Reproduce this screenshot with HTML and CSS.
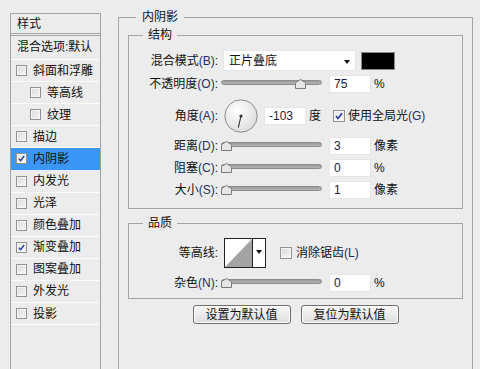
FILE: index.html
```html
<!DOCTYPE html>
<html lang="zh">
<head>
<meta charset="utf-8">
<title>图层样式</title>
<link rel="stylesheet" href="styles.css">
</head>
<body>
<div class="window">
  <aside class="styles">
    <div class="styles-head">样式</div>
    <div class="styles-blend">混合选项:默认</div>
    <ul class="style-list">
      <li class="item"><span class="cb"></span>斜面和浮雕</li>
      <li class="item sub"><span class="cb"></span>等高线</li>
      <li class="item sub"><span class="cb"></span>纹理</li>
      <li class="item"><span class="cb"></span>描边</li>
      <li class="item active"><span class="cb checked"><svg viewBox="0 0 11 11"><path d="M2.2 5.6 L4.4 8.2 L8.8 2.4"/></svg></span>内阴影</li>
      <li class="item"><span class="cb"></span>内发光</li>
      <li class="item"><span class="cb"></span>光泽</li>
      <li class="item"><span class="cb"></span>颜色叠加</li>
      <li class="item"><span class="cb checked"><svg viewBox="0 0 11 11"><path d="M2.2 5.6 L4.4 8.2 L8.8 2.4"/></svg></span>渐变叠加</li>
      <li class="item"><span class="cb"></span>图案叠加</li>
      <li class="item"><span class="cb"></span>外发光</li>
      <li class="item"><span class="cb"></span>投影</li>
    </ul>
  </aside>

  <main class="main">
    <fieldset class="group outer">
      <legend class="legend outer-legend">内阴影</legend>

      <fieldset class="group inner structure">
        <legend class="legend">结构</legend>

        <div class="row r-blend">
          <label class="lbl">混合模式<span class="k">(B)</span>:</label>
          <div class="select">正片叠底<span class="arrow"></span></div>
          <span class="swatch"></span>
        </div>

        <div class="row r-field">
          <label class="lbl">不透明度<span class="k">(O)</span>:</label>
          <div class="slider"><span class="track"></span><svg class="thumb" style="left:74px" viewBox="0 0 11 10"><path d="M0.5 9.5 V4.5 Q0.5 3.5 1.5 3 L5.5 0.5 L9.5 3 Q10.5 3.5 10.5 4.5 V9.5 Z"/></svg></div>
          <span class="num">75</span><span class="unit">%</span>
        </div>

        <div class="row r-angle">
          <label class="lbl">角度<span class="k">(A)</span>:</label>
          <svg class="dial" viewBox="0 0 34 34">
            <defs>
              <radialGradient id="dg" cx="40%" cy="35%" r="70%">
                <stop offset="0" stop-color="#ffffff"/>
                <stop offset="1" stop-color="#dcdcdc"/>
              </radialGradient>
            </defs>
            <circle cx="17" cy="17" r="16.2" fill="url(#dg)" stroke="#8c8c8c" stroke-width="1"/>
            <line x1="17" y1="17" x2="14.3" y2="28.6" stroke="#333" stroke-width="1.1"/>
            <circle cx="17" cy="17" r="1.6" fill="#333"/>
          </svg>
          <span class="num angle-num">-103</span><span class="unit">度</span>
          <span class="cb checked global-cb"><svg viewBox="0 0 11 11"><path d="M2.2 5.6 L4.4 8.2 L8.8 2.4"/></svg></span>
          <span class="cb-text">使用全局光<span class="k">(G)</span></span>
        </div>

        <div class="row r-field">
          <label class="lbl">距离<span class="k">(D)</span>:</label>
          <div class="slider"><span class="track"></span><svg class="thumb" style="left:0px" viewBox="0 0 11 10"><path d="M0.5 9.5 V4.5 Q0.5 3.5 1.5 3 L5.5 0.5 L9.5 3 Q10.5 3.5 10.5 4.5 V9.5 Z"/></svg></div>
          <span class="num">3</span><span class="unit">像素</span>
        </div>

        <div class="row r-field">
          <label class="lbl">阻塞<span class="k">(C)</span>:</label>
          <div class="slider"><span class="track"></span><svg class="thumb" style="left:0px" viewBox="0 0 11 10"><path d="M0.5 9.5 V4.5 Q0.5 3.5 1.5 3 L5.5 0.5 L9.5 3 Q10.5 3.5 10.5 4.5 V9.5 Z"/></svg></div>
          <span class="num">0</span><span class="unit">%</span>
        </div>

        <div class="row r-field">
          <label class="lbl">大小<span class="k">(S)</span>:</label>
          <div class="slider"><span class="track"></span><svg class="thumb" style="left:0px" viewBox="0 0 11 10"><path d="M0.5 9.5 V4.5 Q0.5 3.5 1.5 3 L5.5 0.5 L9.5 3 Q10.5 3.5 10.5 4.5 V9.5 Z"/></svg></div>
          <span class="num">1</span><span class="unit">像素</span>
        </div>
      </fieldset>

      <fieldset class="group inner quality">
        <legend class="legend">品质</legend>

        <div class="row r-contour">
          <label class="lbl">等高线:</label>
          <div class="contour">
            <svg class="contour-preview" viewBox="0 0 28 27" preserveAspectRatio="none">
              <rect x="0" y="0" width="28" height="27" fill="#ffffff"/>
              <polygon points="0,27 28,0 28,27" fill="#a3a3a3"/>
            </svg>
            <span class="contour-drop"><span class="arrow"></span></span>
          </div>
          <span class="cb aa-cb"></span>
          <span class="cb-text">消除锯齿<span class="k">(L)</span></span>
        </div>

        <div class="row r-field r-noise">
          <label class="lbl">杂色<span class="k">(N)</span>:</label>
          <div class="slider"><span class="track"></span><svg class="thumb" style="left:0px" viewBox="0 0 11 10"><path d="M0.5 9.5 V4.5 Q0.5 3.5 1.5 3 L5.5 0.5 L9.5 3 Q10.5 3.5 10.5 4.5 V9.5 Z"/></svg></div>
          <span class="num">0</span><span class="unit">%</span>
        </div>
      </fieldset>

      <div class="buttons">
        <button class="btn" type="button">设置为默认值</button>
        <button class="btn" type="button">复位为默认值</button>
      </div>
    </fieldset>
  </main>
</div>
</body>
</html>
```
FILE: styles.css
```css
* { box-sizing: border-box; }

html, body {
  margin: 0;
  padding: 0;
  background: #ececec;
  height: 369px;
  overflow: hidden;
}

body {
  font-family: "Liberation Sans", "Noto Sans CJK SC", sans-serif;
  font-size: 12px;
  line-height: 16px;
  color: #111;
}

.window {
  display: flex;
  align-items: flex-start;
  height: 369px;
}

/* ---------- left style list ---------- */
.styles {
  margin: 13px 0 0 10px;
  width: 91px;
  height: 356px;
  border: 1px solid #a2a2a2;
  border-bottom: none;
  flex: none;
}

.styles-head {
  height: 22px;
  padding: 2px 0 0 6px;
  border-bottom: 3px double #a2a2a2;
}

.styles-blend {
  height: 24px;
  padding: 3px 0 0 6px;
  white-space: nowrap;
  border-bottom: 1px solid #fbfbfb;
}

.style-list {
  list-style: none;
  margin: 0;
  padding: 0;
}

.item {
  height: 22.1px;
  display: flex;
  align-items: center;
  padding-left: 5px;
  border-bottom: 1px solid #fbfbfb;
  white-space: nowrap;
}

.item.sub { padding-left: 19px; }

.item.active {
  background: #3a97f7;
  border-bottom-color: #3a97f7;
}

.item .cb { margin-right: 6px; }

/* checkbox */
.cb {
  width: 11px;
  height: 11px;
  border: 1px solid #939393;
  background: linear-gradient(135deg, #dadada 0%, #f6f6f6 100%);
  box-shadow: inset 0 0 0 1px #f6f6f6;
  display: inline-block;
  flex: none;
  position: relative;
}

.cb svg {
  display: block;
  width: 9px;
  height: 9px;
}

.cb svg path {
  fill: none;
  stroke: #27379a;
  stroke-width: 1.7;
}

.cb.checked {
  background: linear-gradient(135deg, #e4e4e4 0%, #ffffff 100%);
}

/* ---------- right panel ---------- */
.main {
  margin-left: 17px;
  width: 355px;
  flex: none;
}

.group {
  margin: 0;
  border: 1px solid #a4a4a4;
  min-width: 0;
}

.legend {
  padding: 0 5px;
  margin-left: 14px;
  line-height: 16px;
}

.outer {
  margin-top: 9px;
  width: 355px;
  height: 360px;
  padding: 0 9px;
  border-bottom: none;
}

.outer-legend {
  margin-left: 8px;
  padding: 0 6px;
}

.inner {
  width: 335px;
  padding: 0;
}

.structure {
  margin-top: 2px;
  padding: 7px 0 9px 0;
}

.quality {
  margin-top: 6px;
  padding: 7px 0 6px 0;
}

.row {
  display: flex;
  align-items: center;
  white-space: nowrap;
}

.lbl {
  width: 89px;
  text-align: right;
  flex: none;
}

.k { color: #1e3063; }

.r-blend { height: 21px; }
.r-field { height: 18px; margin-top: 4px; }
.r-angle { height: 33px; margin-top: 6px; }
.r-angle + .r-field { margin-top: 5px; }

/* select */
.select {
  margin-left: 5px;
  width: 133px;
  height: 21px;
  background: #fff;
  border: 1px solid #e6e6e6;
  padding: 2px 0 0 5px;
  position: relative;
}

.arrow {
  position: absolute;
  right: 5px;
  top: 9px;
  width: 0;
  height: 0;
  border-left: 3.5px solid transparent;
  border-right: 3.5px solid transparent;
  border-top: 4px solid #111;
}

.swatch {
  margin-left: 5px;
  width: 34px;
  height: 18px;
  background: #000;
  border: 1px solid #8a8a8a;
  flex: none;
}

/* slider */
.slider {
  margin-left: 3px;
  width: 101px;
  height: 10px;
  position: relative;
  flex: none;
}

.track {
  position: absolute;
  left: 0;
  right: 0;
  top: 1px;
  height: 5px;
  border-radius: 3px;
  border: 1px solid #8c8c8c;
  background: linear-gradient(#9a9a9a, #b4b4b4);
}

.thumb {
  position: absolute;
  top: 0;
  width: 11px;
  height: 10px;
}

.thumb path {
  fill: #e6e6e6;
  stroke: #7a7a7a;
  stroke-width: 1;
}

.num {
  margin-left: 7px;
  width: 42px;
  height: 18px;
  background: #fff;
  border: 1px solid #e6e6e6;
  padding: 0 0 0 4px;
  line-height: 16px;
  color: #1a1a3a;
  flex: none;
}

.unit { margin-left: 3px; }

/* angle */
.dial {
  margin-left: 6px;
  width: 34px;
  height: 34px;
  flex: none;
}

.angle-num {
  margin-left: 6px;
}

.global-cb {
  margin-left: 12px;
  margin-right: 3px;
  width: 12px;
  height: 12px;
}

.global-cb svg {
  width: 10px;
  height: 10px;
}

/* contour */
.r-contour { height: 30px; }

.contour {
  margin-left: 6px;
  width: 42px;
  height: 30px;
  border: 1px solid #222;
  display: flex;
  background: #fff;
  flex: none;
}

.contour-preview {
  width: 28px;
  height: 28px;
  display: block;
  border-right: 1px solid #222;
}

.contour-drop {
  flex: 1;
  position: relative;
}

.contour-drop .arrow {
  right: 3px;
  top: 11px;
}

.aa-cb {
  margin-left: 14px;
  margin-right: 4px;
  width: 12px;
  height: 12px;
}

.r-noise { margin-top: 6px; }

/* buttons */
.buttons {
  display: flex;
  justify-content: center;
  gap: 10px;
  margin-top: 6px;
}

.btn {
  width: 98px;
  height: 19px;
  padding: 0;
  font: inherit;
  line-height: 16px;
  color: #111;
  border: 1px solid #6f6f6f;
  border-radius: 3px;
  background: linear-gradient(#f7f7f7, #dedede);
  box-shadow: inset 0 0 0 1px #fbfbfb;
}
```
